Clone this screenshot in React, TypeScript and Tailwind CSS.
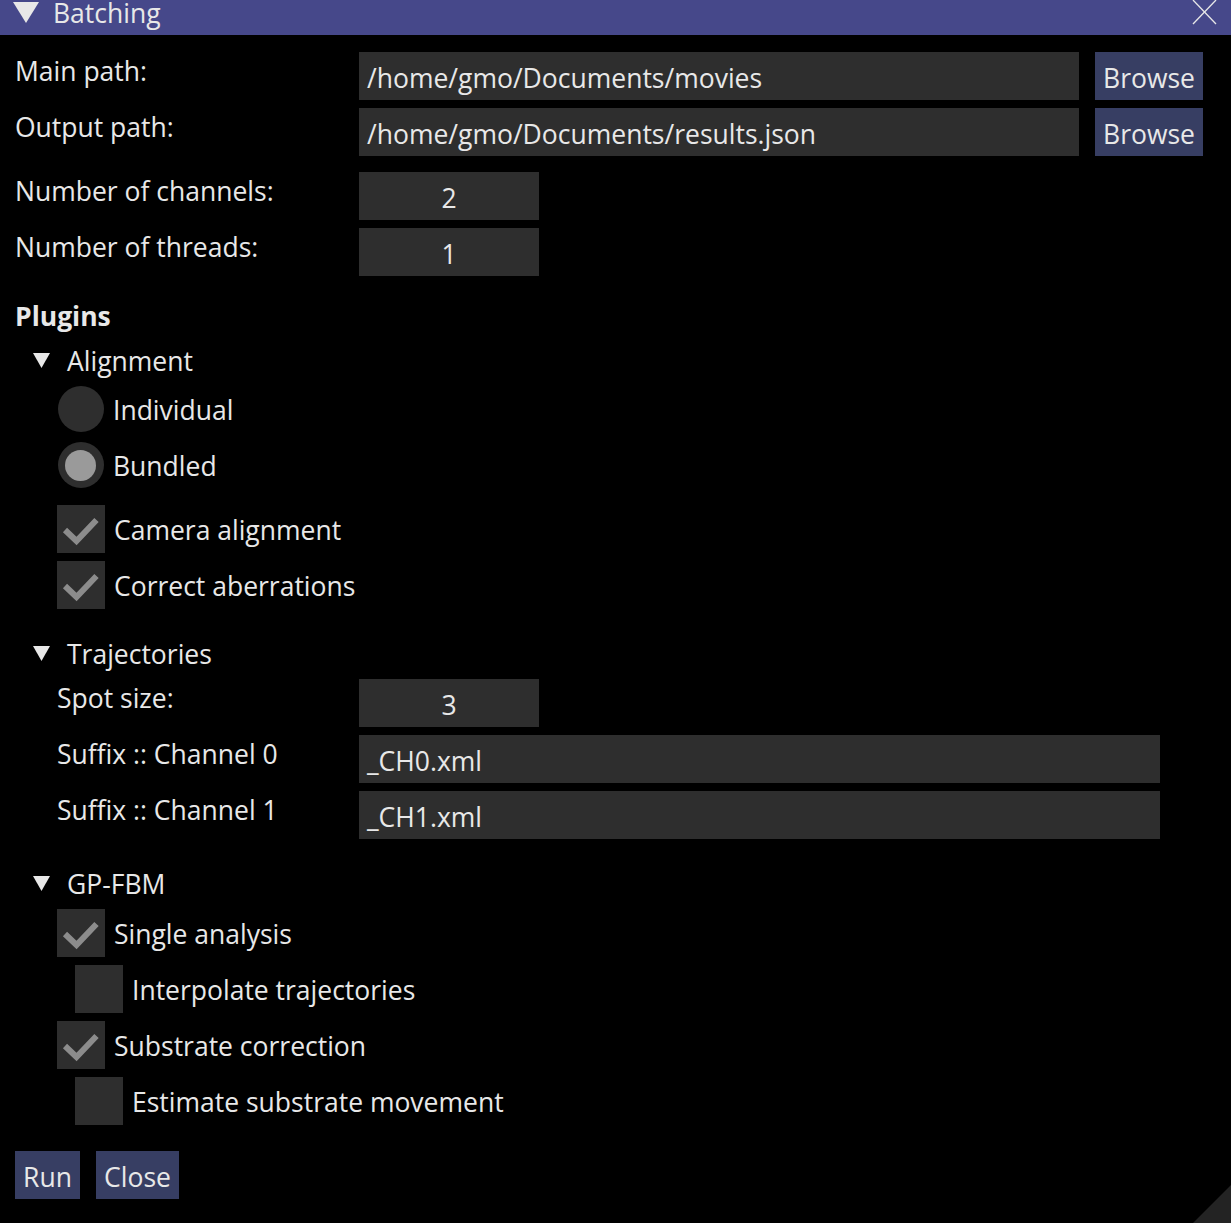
import React from 'react';

// ImGui-like "Batching" window

const Tri = ({ className = '' }: { className?: string }) => (
  <svg width="17" height="15" viewBox="0 0 17 15" className={className}>
    <polygon points="0,0 17,0 8.5,15" fill="#e8e8e8" />
  </svg>
);

const Check = () => (
  <svg width="48" height="48" viewBox="0 0 48 48">
    <polyline points="8,25 19.5,36 39.5,15" fill="none" stroke="#8c8c8c" strokeWidth="6" />
  </svg>
);

function Field({ value, width, center = false }: { value: string; width: string; center?: boolean }) {
  return (
    <div className={`${width} h-[48px] bg-[#2e2e2e] flex items-center ${center ? 'justify-center' : 'pl-[8px]'}`}>
      <span className="leading-[38px] mt-[3px] whitespace-nowrap">{value}</span>
    </div>
  );
}

function Btn({ label, width }: { label: string; width: string }) {
  return (
    <div className={`${width} h-[48px] bg-[#373e63] flex items-center justify-center`}>
      <span className="leading-[38px] mt-[3px]">{label}</span>
    </div>
  );
}

function CheckRow({ label, checked, indent = false, mt }: { label: string; checked: boolean; indent?: boolean; mt: string }) {
  return (
    <div className={`flex items-start ${mt} ${indent ? 'ml-[75px]' : 'ml-[57px]'}`}>
      <div className="w-[48px] h-[48px] bg-[#2e2e2e]">{checked && <Check />}</div>
      <span className="ml-[9px] leading-[38px] mt-[6px] whitespace-nowrap">{label}</span>
    </div>
  );
}

function RadioRow({ label, active, mt }: { label: string; active: boolean; mt: string }) {
  return (
    <div className={`flex items-start ml-[57px] ${mt}`}>
      <div className="w-[47px] h-[48px] flex items-center justify-center">
        <div className="w-[46px] h-[46px] rounded-full bg-[#2e2e2e] flex items-center justify-center">
          {active && <div className="w-[31px] h-[31px] rounded-full bg-[#9a9a9a]" />}
        </div>
      </div>
      <span className="ml-[9px] leading-[38px] mt-[6px]">{label}</span>
    </div>
  );
}

function TreeNode({ label, mt }: { label: string; mt: string }) {
  return (
    <div className={`flex items-start ${mt}`}>
      <Tri className="ml-[33px] mt-[11px]" />
      <span className="ml-[17px] leading-[38px]">{label}</span>
    </div>
  );
}

function LabelRow({ label, mt, children, indent = false }: { label: string; mt: string; children: React.ReactNode; indent?: boolean }) {
  return (
    <div className={`flex items-start ${mt}`}>
      <div className={`w-[359px] ${indent ? 'pl-[57px]' : 'pl-[15px]'}`}>
        <span className="leading-[38px] block">{label}</span>
      </div>
      {children}
    </div>
  );
}

export default function App() {
  return (
    <div className="w-[1231px] h-[1223px] bg-black relative overflow-hidden font-['Open_Sans',sans-serif] text-[26.5px] text-[#e8e8e8]">
      {/* Title bar */}
      <div className="h-[35px] bg-[#46488a] flex items-start relative">
        <svg width="26" height="21" viewBox="0 0 26 21" className="ml-[13px] mt-[2px]">
          <polygon points="0,0 26,0 13,21" fill="#e8e8e8" />
        </svg>
        <span className="ml-[14px] leading-[26px]">Batching</span>
        <svg width="25" height="26" viewBox="0 0 25 26" className="absolute right-[14px] -top-[1px]">
          <line x1="1" y1="1" x2="24" y2="25" stroke="#e8e8e8" strokeWidth="1.3" />
          <line x1="24" y1="1" x2="1" y2="25" stroke="#e8e8e8" strokeWidth="1.3" />
        </svg>
      </div>

      <LabelRow label="Main path:" mt="mt-[17px]">
        <Field value="/home/gmo/Documents/movies" width="w-[720px]" />
        <div className="ml-[16px]">
          <Btn label="Browse" width="w-[108px]" />
        </div>
      </LabelRow>
      <LabelRow label="Output path:" mt="mt-[8px]">
        <Field value="/home/gmo/Documents/results.json" width="w-[720px]" />
        <div className="ml-[16px]">
          <Btn label="Browse" width="w-[108px]" />
        </div>
      </LabelRow>

      <LabelRow label="Number of channels:" mt="mt-[16px]">
        <Field value="2" width="w-[180px]" center />
      </LabelRow>
      <LabelRow label="Number of threads:" mt="mt-[8px]">
        <Field value="1" width="w-[180px]" center />
      </LabelRow>

      <div className="mt-[21px] pl-[15px] font-bold leading-[38px]">Plugins</div>

      <TreeNode label="Alignment" mt="mt-[7px]" />
      <RadioRow label="Individual" active={false} mt="mt-[5px]" />
      <RadioRow label="Bundled" active mt="mt-[8px]" />
      <CheckRow label="Camera alignment" checked mt="mt-[16px]" />
      <CheckRow label="Correct aberrations" checked mt="mt-[8px]" />

      <TreeNode label="Trajectories" mt="mt-[26px]" />
      <LabelRow label="Spot size:" mt="mt-[6px]" indent>
        <Field value="3" width="w-[180px]" center />
      </LabelRow>
      <LabelRow label="Suffix :: Channel 0" mt="mt-[8px]" indent>
        <Field value="_CH0.xml" width="w-[801px]" />
      </LabelRow>
      <LabelRow label="Suffix :: Channel 1" mt="mt-[8px]" indent>
        <Field value="_CH1.xml" width="w-[801px]" />
      </LabelRow>

      <TreeNode label="GP-FBM" mt="mt-[26px]" />
      <CheckRow label="Single analysis" checked mt="mt-[6px]" />
      <CheckRow label="Interpolate trajectories" checked={false} indent mt="mt-[8px]" />
      <CheckRow label="Substrate correction" checked mt="mt-[8px]" />
      <CheckRow label="Estimate substrate movement" checked={false} indent mt="mt-[8px]" />

      <div className="flex mt-[26px] ml-[15px] gap-[16px]">
        <Btn label="Run" width="w-[65px]" />
        <Btn label="Close" width="w-[83px]" />
      </div>

      {/* resize grip */}
      <svg width="38" height="38" viewBox="0 0 38 38" className="absolute right-0 bottom-0">
        <polygon points="38,0 38,38 0,38" fill="#232323" />
      </svg>
    </div>
  );
}
